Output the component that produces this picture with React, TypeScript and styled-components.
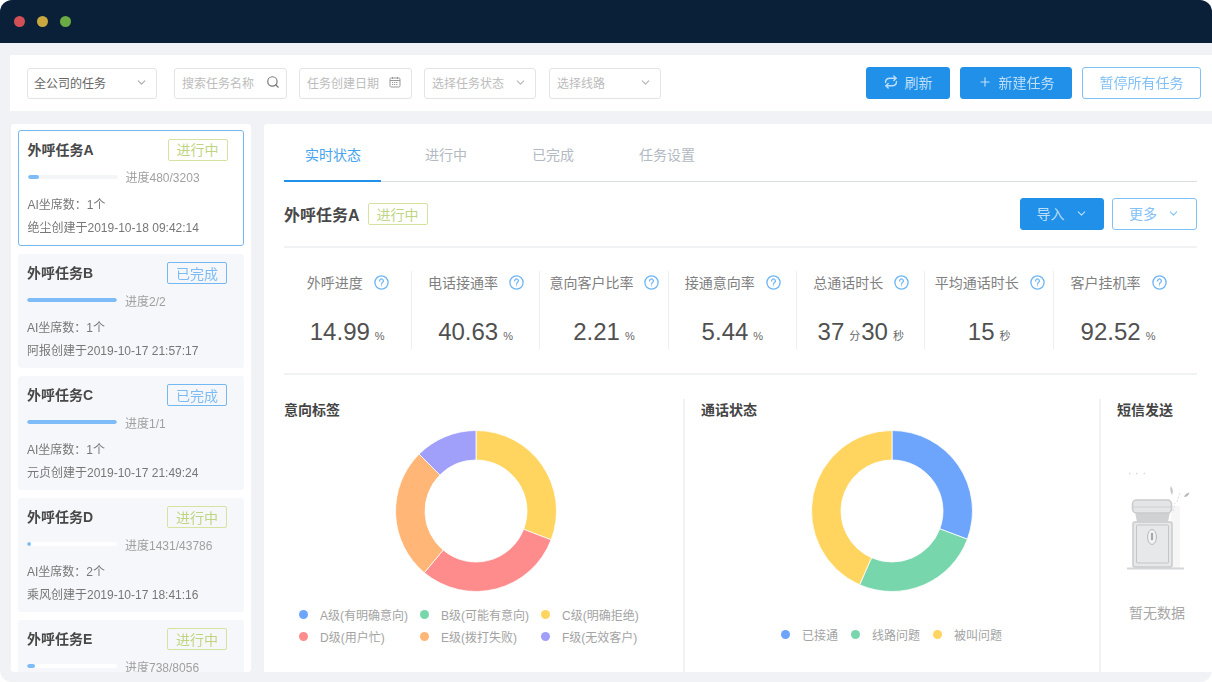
import React from "react";
import styled, { createGlobalStyle } from "styled-components";
import { ChevronDown, Plus, Search } from "lucide-react";

const Global = createGlobalStyle`
  html, body { margin: 0; padding: 0; background: #fff; }
  body { font-family: "Liberation Sans", "Noto Sans CJK SC", sans-serif; }
  * { box-sizing: border-box; }
`;

const Win = styled.div`
  width: 1212px; height: 682px; background: #f0f2f6; border-radius: 12px;
  overflow: hidden; display: flex; flex-direction: column; filter: blur(0.55px);
`;
const TitleBar = styled.div`
  height: 43px; flex: none; background: #0a2038; display: flex; align-items: center;
  gap: 12px; padding-left: 14px;
`;
const Light = styled.span<{ $c: string }>`
  width: 11px; height: 11px; border-radius: 50%; background: ${(p) => p.$c};
`;
const FilterBar = styled.div`
  height: 56px; flex: none; margin: 12px 0 13px 10px; background: #fff;
  display: flex; align-items: center; padding: 0 11px 0 17px;
`;
const Field = styled.div<{ $w: number; $mr: number; $dark?: boolean }>`
  width: ${(p) => p.$w}px; margin-right: ${(p) => p.$mr}px; height: 31px; border: 1px solid #e2e4e8;
  border-radius: 3px; display: flex; align-items: center; justify-content: space-between;
  padding: 0 8px 2px ${(p) => (p.$dark ? 6 : 7)}px; font-size: 12px; color: ${(p) => (p.$dark ? "#666" : "#bcbcbc")};
  svg { flex: none; color: ${(p) => (p.$dark ? "#aaa" : "#b5b5b5")}; }
`;
const SearchGlyph = styled(Search)`
  margin-right: -2px;
`;
const CalendarSvg = styled.svg`
  margin-right: 2px;
`;
const Spacer = styled.div`flex: 1;`;
const Btn = styled.button<{ $w: number; $outline?: boolean; $ml?: number }>`
  width: ${(p) => p.$w}px; height: 32px; margin-left: ${(p) => p.$ml ?? 0}px; border-radius: 3px;
  font: inherit; font-size: 14px; padding: 0 0 2px; display: flex; align-items: center; justify-content: center;
  background: ${(p) => (p.$outline ? "#fff" : "#2090e8")};
  color: ${(p) => (p.$outline ? "#82c1f5" : "#bfdff9")};
  border: 1.5px solid ${(p) => (p.$outline ? "#82c1f5" : "#2090e8")};
`;
const BtnIcon = styled.span<{ $gap: number }>`
  display: flex; margin-right: ${(p) => p.$gap}px;
`;
const BtnChevron = styled.span`
  display: flex; margin-left: 10px;
`;
const Workspace = styled.div`
  flex: 1; min-height: 0; display: flex; gap: 13px; margin: 0 0 10px 11px;
`;
const Sidebar = styled.aside`
  width: 240px; flex: none; background: #fff; border-radius: 3px; overflow: hidden;
  padding: 6px 7px; display: flex; flex-direction: column; gap: 8px;
`;
const Card = styled.div<{ $active?: boolean }>`
  flex: none; height: ${(p) => (p.$active ? 116 : 114)}px; border-radius: 3px;
  background: ${(p) => (p.$active ? "#fff" : "#f6f7fa")};
  border: ${(p) => (p.$active ? "1.5px solid #74b8f1" : "none")};
  padding: ${(p) => (p.$active ? "7.5px 15.5px 0 8.5px" : "8px 17px 0 9px")};
`;
const CardTop = styled.div`
  display: flex; align-items: center; justify-content: space-between; height: 22px;
`;
const CardTitle = styled.div`
  font-size: 14px; font-weight: 700; color: #484848; padding-bottom: 2px;
`;
const Tag = styled.span<{ $done?: boolean }>`
  width: 60px; height: 22px; border-radius: 2px; font-size: 14px; padding-bottom: 1px;
  display: flex; align-items: center; justify-content: center;
  border: 1.5px solid ${(p) => (p.$done ? "#74b8f1" : "#d5e3a0")};
  color: ${(p) => (p.$done ? "#7cbcf5" : "#c0d582")};
`;
const ProgressRow = styled.div`
  display: flex; align-items: center; margin-top: 7px; height: 18px; font-size: 12px; color: #a0a0a0;
`;
const Track = styled.div<{ $active?: boolean }>`
  width: 90px; height: 4px; border-radius: 2px; margin-right: 8px;
  background: ${(p) => (p.$active ? "#f4f5f7" : "#fff")}; overflow: hidden;
`;
const Fill = styled.div`
  height: 100%; background: #7ebcf7; border-radius: 2px;
`;
const CardLine = styled.div<{ $mt: number }>`
  font-size: 12px; color: #777; margin-top: ${(p) => p.$mt}px; line-height: 18px; white-space: nowrap;
`;
const Main = styled.main`
  flex: 1; min-width: 0; background: #fff; padding: 0 15px 0 20px; display: flex; flex-direction: column;
  border-radius: 3px 0 0 0;
`;
const Tabs = styled.div`
  height: 58px; flex: none; display: flex; gap: 23px; border-bottom: 1px solid #d9dde2;
`;
const Tab = styled.div<{ $on?: boolean }>`
  padding: ${(p) => (p.$on ? "0 20px 0 21px" : "0 21px")}; height: 58px; line-height: 62px; font-size: 14px;
  color: ${(p) => (p.$on ? "#46a4ee" : "#b3bac2")};
  border-bottom: ${(p) => (p.$on ? "2px solid #2090e8" : "none")};
`;
const Header = styled.div`
  flex: none; height: 32px; margin-top: 16px; display: flex; align-items: center; gap: 8px;
`;
const HeaderTitle = styled.div`
  font-size: 16px; font-weight: 700; color: #484848; padding-bottom: 1px;
`;
const Rule = styled.div<{ $mt: number }>`
  flex: none; height: 2px; background: #f1f2f4; margin-top: ${(p) => p.$mt}px;
`;
const Stats = styled.div`
  flex: none; display: grid; grid-template-columns: repeat(7, 128.4px); margin: 23px 0 24px -0.5px; height: 78px;
`;
const Stat = styled.div<{ $last?: boolean }>`
  border-right: ${(p) => (p.$last ? "none" : "1px solid #edeef0")}; padding-left: 1px;
  display: flex; flex-direction: column; align-items: center;
`;
const StatLabel = styled.div`
  display: flex; align-items: center; height: 22px; gap: 11px; font-size: 14px; color: #808080;
  svg { flex: none; }
`;
const StatValue = styled.div`
  margin-top: 25px; height: 31px; display: flex; align-items: baseline; font-size: 24px; color: #505050; white-space: nowrap;
`;
const Unit = styled.span`
  font-size: 11px; margin: 0 1px 0 5px; color: #666;
`;
const Charts = styled.div`
  flex: 1; min-height: 0; display: flex; margin-top: 24px; margin-right: -15px;
`;
const Section = styled.section<{ $w: number; $pr: number; $pl: number; $line?: boolean }>`
  width: ${(p) => p.$w}px; flex: none; padding: 0 ${(p) => p.$pr}px 0 ${(p) => p.$pl}px;
  border-right: ${(p) => (p.$line ? "2px solid #f1f2f4" : "none")};
  display: flex; flex-direction: column;
`;
const SectionTitle = styled.h3<{ $pl?: number }>`
  margin: 0 0 9px ${(p) => p.$pl ?? 0}px; font-size: 14px; font-weight: 700; line-height: 22px; color: #444;
`;
const DonutBox = styled.div`
  display: flex; justify-content: center;
`;
const LegendGrid = styled.div`
  display: grid; grid-template-columns: repeat(3, 121px); margin: 11px 0 0 15px;
`;
const LegendRow = styled.div`
  display: flex; justify-content: center; margin: 31px 0 0 -1px; gap: 13px;
`;
const LegendItem = styled.div<{ $c: string }>`
  height: 22px; display: flex; align-items: center; font-size: 12px; color: #a3a3a3; white-space: nowrap; gap: 12px;
  &::before { content: ""; width: 9px; height: 9px; border-radius: 50%; background: ${(p) => p.$c}; flex: none; }
`;
const Empty = styled.div`
  display: flex; flex-direction: column; width: 92px; margin-top: 40px; align-items: center;
  svg { margin-left: 6px; }
`;
const EmptyText = styled.div`
  font-size: 14px; color: #a6a6a6; margin-top: 28px; white-space: nowrap;
`;

const Help = () => (
  <svg width="15" height="15" viewBox="0 0 15 15" fill="none" stroke="#6db5f5" strokeWidth="1.3">
    <circle cx="7.5" cy="7.5" r="6.6" />
    <path d="M5.6 5.9a1.9 1.9 0 1 1 2.9 1.6c-.7.4-1 .7-1 1.5" strokeLinecap="round" />
    <circle cx="7.5" cy="10.8" r=".5" fill="#6db5f5" stroke="none" />
  </svg>
);

const Calendar = () => (
  <CalendarSvg width="12" height="12" viewBox="0 0 12 12" fill="none" stroke="#999" strokeWidth="1">
    <rect x="1" y="2" width="10" height="9" rx="1.2" />
    <path d="M1 4.5h10M3.5 1v2M8.5 1v2" />
    <path d="M3 6.5h6M3 8.5h6" strokeDasharray="1.2 .9" />
  </CalendarSvg>
);

const Sync = () => (
  <svg width="14" height="14" viewBox="0 0 14 14" fill="none" stroke="currentColor" strokeWidth="1.4" strokeLinecap="round" strokeLinejoin="round">
    <path d="M1.500 7.500C1.500 4.800 3.400 3.200 6 3.200h6" />
    <path d="M9.800 1 12 3.200 9.800 5.400" />
    <path d="M12.500 6.500c0 2.700-1.900 4.300-4.500 4.300H2" />
    <path d="M4.200 13 2 10.800l2.200-2.200" />
  </svg>
);

type Seg = { to: number; c: string };
const pt = (a: number, r: number) => {
  const t = (a * Math.PI) / 180;
  return `${(81 + r * Math.sin(t)).toFixed(2)} ${(81 - r * Math.cos(t)).toFixed(2)}`;
};
const Donut = ({ segs }: { segs: Seg[] }) => {
  let from = 0;
  return (
    <svg width="162" height="162" viewBox="0 0 162 162">
      {segs.map((s) => {
        const large = s.to - from > 180 ? 1 : 0;
        const d = `M${pt(from, 80.5)}A80.5 80.5 0 ${large} 1 ${pt(s.to, 80.5)}L${pt(s.to, 51)}A51 51 0 ${large} 0 ${pt(from, 51)}Z`;
        from = s.to;
        return <path key={s.to} d={d} fill={s.c} stroke="#fff" strokeWidth="0.8" />;
      })}
    </svg>
  );
};

const Dispenser = () => (
  <svg width="66" height="104" viewBox="0 0 66 104" fill="none">
    <path d="M44 36h9v62H44z" fill="#f6f6f7" />
    <path d="M0 98.500h57" stroke="#d5d6d8" strokeWidth="2" />
    <rect x="6" y="52" width="39" height="45" rx="2" fill="#e7e8ea" stroke="#c9cacc" strokeWidth="1.5" />
    <rect x="9.500" y="55" width="32" height="38" rx="1" stroke="#c4c5c7" strokeWidth="1" />
    <path d="M8 42h35l-2 10H10z" fill="#d0d1d3" />
    <rect x="5.500" y="30" width="39" height="13" rx="4" fill="#e4e5e7" stroke="#c9cacc" strokeWidth="1.5" />
    <path d="M6 37h38" stroke="#cfd0d2" strokeWidth="1" />
    <ellipse cx="25" cy="67" rx="4.500" ry="7.500" fill="#eff0f1" stroke="#b9babc" strokeWidth="1" />
    <path d="M25 63v7" stroke="#8d8e90" strokeWidth="1.500" />
    <path d="M45 25c-2-3-2-6-1.500-9 2 2 3.500 5 1.500 9z" fill="#c9cacc" />
    <path d="M57 27c1-3 3-4 5.500-4.500-1 3-2.500 4.500-5.500 4.500z" fill="#b9babc" />
    <path d="M46 41l2-8M50 32l3-9" stroke="#dcdde0" strokeWidth="1" strokeDasharray="2 1.500" />
    <path d="M2 3.500h1.500M9 3.500h1.500M16.500 3.500h1.500" stroke="#d8d9db" strokeWidth="1.500" />
  </svg>
);

type Task = { name: string; done: boolean; pct: number; prog: string; seats?: number; by?: string };
const tasks: Task[] = [
  { name: "外呼任务A", done: false, pct: 13.3, prog: "进度480/3203", seats: 1, by: "绝尘创建于2019-10-18 09:42:14" },
  { name: "外呼任务B", done: true, pct: 100, prog: "进度2/2", seats: 1, by: "阿报创建于2019-10-17 21:57:17" },
  { name: "外呼任务C", done: true, pct: 100, prog: "进度1/1", seats: 1, by: "元贞创建于2019-10-17 21:49:24" },
  { name: "外呼任务D", done: false, pct: 4, prog: "进度1431/43786", seats: 2, by: "乘风创建于2019-10-17 18:41:16" },
  { name: "外呼任务E", done: false, pct: 9, prog: "进度738/8056" },
];

const stats: { label: string; parts: [string, string][] }[] = [
  { label: "外呼进度", parts: [["14.99", "%"]] },
  { label: "电话接通率", parts: [["40.63", "%"]] },
  { label: "意向客户比率", parts: [["2.21", "%"]] },
  { label: "接通意向率", parts: [["5.44", "%"]] },
  { label: "总通话时长", parts: [["37", "分"], ["30", "秒"]] },
  { label: "平均通话时长", parts: [["15", "秒"]] },
  { label: "客户挂机率", parts: [["92.52", "%"]] },
];

const legend1 = [
  ["#6ea5fc", "A级(有明确意向)"], ["#78d6ac", "B级(可能有意向)"], ["#ffd45f", "C级(明确拒绝)"],
  ["#ff8c8c", "D级(用户忙)"], ["#ffb677", "E级(拨打失败)"], ["#a0a0fb", "F级(无效客户)"],
];
const legend2 = [["#6ea5fc", "已接通"], ["#78d6ac", "线路问题"], ["#ffd45f", "被叫问题"]];

export default function App() {
  return (
    <>
      <Global />
      <Win>
        <TitleBar>
          <Light $c="#d14f55" />
          <Light $c="#c9a83f" />
          <Light $c="#6aab44" />
        </TitleBar>
        <FilterBar>
          <Field $w={130} $mr={17} $dark>全公司的任务<ChevronDown size={13} /></Field>
          <Field $w={113} $mr={12}>搜索任务名称<SearchGlyph size={14} color="#777" /></Field>
          <Field $w={113} $mr={12}>任务创建日期<Calendar /></Field>
          <Field $w={112} $mr={13}>选择任务状态<ChevronDown size={13} /></Field>
          <Field $w={112} $mr={0}>选择线路<ChevronDown size={13} /></Field>
          <Spacer />
          <Btn $w={84}><BtnIcon $gap={7}><Sync /></BtnIcon>刷新</Btn>
          <Btn $w={112} $ml={10}><BtnIcon $gap={7}><Plus size={14} /></BtnIcon>新建任务</Btn>
          <Btn $w={119} $ml={10} $outline>暂停所有任务</Btn>
        </FilterBar>
        <Workspace>
          <Sidebar>
            {tasks.map((t, i) => (
              <Card key={t.name} $active={i === 0}>
                <CardTop>
                  <CardTitle>{t.name}</CardTitle>
                  <Tag $done={t.done}>{t.done ? "已完成" : "进行中"}</Tag>
                </CardTop>
                <ProgressRow>
                  <Track $active={i === 0}><Fill style={{ width: `${t.pct}%` }} /></Track>
                  {t.prog}
                </ProgressRow>
                {t.seats !== undefined && <CardLine $mt={10}>{`AI坐席数\uFF1A${t.seats}个`}</CardLine>}
                {t.by && <CardLine $mt={5}>{t.by}</CardLine>}
              </Card>
            ))}
          </Sidebar>
          <Main>
            <Tabs>
              <Tab $on>实时状态</Tab>
              <Tab>进行中</Tab>
              <Tab>已完成</Tab>
              <Tab>任务设置</Tab>
            </Tabs>
            <Header>
              <HeaderTitle>外呼任务A</HeaderTitle>
              <Tag>进行中</Tag>
              <Spacer />
              <Btn $w={84}>导入<BtnChevron><ChevronDown size={13} /></BtnChevron></Btn>
              <Btn $w={85} $outline>更多<BtnChevron><ChevronDown size={13} /></BtnChevron></Btn>
            </Header>
            <Rule $mt={16} />
            <Stats>
              {stats.map((s, i) => (
                <Stat key={s.label} $last={i === 6}>
                  <StatLabel>{s.label}<Help /></StatLabel>
                  <StatValue>
                    {s.parts.map(([v, u]) => (
                      <React.Fragment key={u}>{v}<Unit>{u}</Unit></React.Fragment>
                    ))}
                  </StatValue>
                </Stat>
              ))}
            </Stats>
            <Rule $mt={0} />
            <Charts>
              <Section $w={401} $pr={16} $pl={0} $line>
                <SectionTitle>意向标签</SectionTitle>
                <DonutBox>
                  <Donut segs={[{ to: 111, c: "#ffd45f" }, { to: 220, c: "#ff8c8c" }, { to: 315, c: "#ffb677" }, { to: 360, c: "#a0a0fb" }]} />
                </DonutBox>
                <LegendGrid>
                  {legend1.map(([c, l]) => <LegendItem key={l} $c={c}>{l}</LegendItem>)}
                </LegendGrid>
              </Section>
              <Section $w={416} $pr={16} $pl={16} $line>
                <SectionTitle>通话状态</SectionTitle>
                <DonutBox>
                  <Donut segs={[{ to: 110.5, c: "#6ea5fc" }, { to: 203.7, c: "#78d6ac" }, { to: 360, c: "#ffd45f" }]} />
                </DonutBox>
                <LegendRow>
                  {legend2.map(([c, l]) => <LegendItem key={l} $c={c}>{l}</LegendItem>)}
                </LegendRow>
              </Section>
              <Section $w={111} $pr={0} $pl={10}>
                <SectionTitle $pl={6}>短信发送</SectionTitle>
                <Empty>
                  <Dispenser />
                  <EmptyText>暂无数据</EmptyText>
                </Empty>
              </Section>
            </Charts>
          </Main>
        </Workspace>
      </Win>
    </>
  );
}
